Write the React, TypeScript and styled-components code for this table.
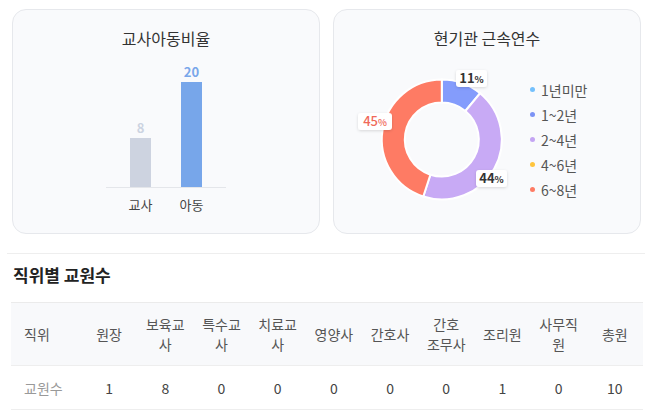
import React from 'react'
import styled, { createGlobalStyle } from 'styled-components'

const GlobalStyle = createGlobalStyle`
    html, body {
        margin: 0;
        padding: 0;
        background: #ffffff;
    }
    body {
        font-family: 'Noto Sans CJK KR', 'Noto Sans', sans-serif;
        color: #333;
    }
`

const FONT = "'Noto Sans CJK KR', 'Noto Sans', sans-serif"

const Page = styled.div`
    padding-top: 9px;
    width: 646px;
`

const CardRow = styled.div`
    display: grid;
    grid-template-columns: 308px 308px;
    gap: 13px;
    margin-left: 12px;
`

const Card = styled.div`
    box-sizing: border-box;
    height: 225px;
    padding-top: 17px;
    background: #f9fafc;
    border: 1px solid #e6e8ec;
    border-radius: 14px;
    display: flex;
    flex-direction: column;
    align-items: center;
`

const CardTitle = styled.h3`
    margin: 0;
    font-size: 16px;
    line-height: 22px;
    font-weight: 400;
    color: #333;
`

const BarChartSvg = styled.svg`
    margin-top: 11px;
    display: block;
`

const DonutBody = styled.div`
    display: flex;
    align-items: center;
    align-self: stretch;
    margin-top: 13px;
    padding-left: 13px;
    height: 155px;
`

const Legend = styled.ul`
    list-style: none;
    margin: 0 0 0 13px;
    padding: 0;
    display: flex;
    flex-direction: column;
`

const LegendItem = styled.li`
    display: flex;
    align-items: center;
    gap: 6px;
    height: 25px;
    font-size: 14px;
    color: #555;
`

const Dot = styled.span<{ $color: string }>`
    width: 5px;
    height: 5px;
    border-radius: 50%;
    background: ${({ $color }) => $color};
`

const Divider = styled.hr`
    margin: 19px 1px 0 7px;
    border: 0;
    height: 1px;
    background: #eeeeee;
`

const SectionTitle = styled.h2`
    margin: 9px 0 0 13px;
    font-size: 17px;
    line-height: 24px;
    font-weight: 700;
    color: #222;
`

const Table = styled.table`
    margin: 15px 0 0 11px;
    width: 632px;
    table-layout: fixed;
    border-collapse: collapse;
    font-size: 14px;
    line-height: 20px;
`

const HeadRow = styled.tr`
    background: #f8f9fb;
    border-top: 1px solid #ebebeb;
    border-bottom: 1px solid #eeeeee;
`

const Th = styled.th<{ $first?: boolean }>`
    font-weight: 400;
    color: #555;
    white-space: nowrap;
    padding: ${({ $first }) => ($first ? '11px 0 11px 13px' : '11px 2px')};
    text-align: ${({ $first }) => ($first ? 'left' : 'center')};
`

const HeadLine = styled.span`
    display: block;
`

const BodyRow = styled.tr`
    border-bottom: 1px solid #eeeeee;
`

const Td = styled.td<{ $first?: boolean }>`
    padding: ${({ $first }) => ($first ? '12px 0 11px 13px' : '12px 2px 11px')};
    text-align: ${({ $first }) => ($first ? 'left' : 'center')};
    color: ${({ $first }) => ($first ? '#999' : '#444')};
`

const bars = [
    { label: '교사', value: 8, height: 49, color: '#cdd3e0', text: '#ccd3e1', x: 24 },
    { label: '아동', value: 20, height: 105, color: '#77a6ea', text: '#7aa7ea', x: 75 },
]

const segments = [
    { label: '1년미만', value: 0, color: '#74c0fc', legend: '#74c0fc' },
    { label: '1~2년', value: 11, color: '#849cfc', legend: '#7c93f5' },
    { label: '2~4년', value: 44, color: '#c8aaf5', legend: '#c4a5f3' },
    { label: '4~6년', value: 0, color: '#ffc53d', legend: '#ffc53d' },
    { label: '6~8년', value: 45, color: '#fe7b64', legend: '#fe7b64' },
]

// label boxes around the donut (centre x, centre y in svg coords)
const labelPos: Record<string, { x: number; y: number; w: number; color: string; weight: number }> = {
    '1~2년': { x: 124.5, y: 16.5, w: 31, color: '#333', weight: 700 },
    '2~4년': { x: 144.5, y: 116.5, w: 31, color: '#333', weight: 700 },
    '6~8년': { x: 28, y: 59.5, w: 34, color: '#f0695a', weight: 500 },
}

const columns = [
    ['원장'],
    ['보육교', '사'],
    ['특수교', '사'],
    ['치료교', '사'],
    ['영양사'],
    ['간호사'],
    ['간호', '조무사'],
    ['조리원'],
    ['사무직', '원'],
    ['총원'],
]
const counts = [1, 8, 0, 0, 0, 0, 0, 1, 0, 10]

const CX = 94.8
const CY = 77.5
const R_OUT = 60
const R_IN = 37

function pt(r: number, deg: number) {
    const a = (deg * Math.PI) / 180
    return `${(CX + r * Math.sin(a)).toFixed(2)} ${(CY - r * Math.cos(a)).toFixed(2)}`
}

function sector(a0: number, a1: number) {
    const large = a1 - a0 > 180 ? 1 : 0
    return [
        `M ${pt(R_OUT, a0)}`,
        `A ${R_OUT} ${R_OUT} 0 ${large} 1 ${pt(R_OUT, a1)}`,
        `L ${pt(R_IN, a1)}`,
        `A ${R_IN} ${R_IN} 0 ${large} 0 ${pt(R_IN, a0)}`,
        'Z',
    ].join(' ')
}

function BarChart() {
    return (
        <BarChartSvg width="120" height="158" viewBox="0 0 120 158" fontFamily={FONT}>
            <line x1="0" y1="127.5" x2="120" y2="127.5" stroke="#e4e6ea" strokeWidth="1" />
            {bars.map((b) => (
                <g key={b.label}>
                    <rect x={b.x} y={127 - b.height} width="21" height={b.height} fill={b.color} />
                    <text
                        x={b.x + 10.5}
                        y={127 - b.height - 5}
                        textAnchor="middle"
                        fontSize="13"
                        fontWeight="700"
                        fill={b.text}
                    >
                        {b.value}
                    </text>
                    <text x={b.x + 10.5} y="150" textAnchor="middle" fontSize="13" fill="#444">
                        {b.label}
                    </text>
                </g>
            ))}
        </BarChartSvg>
    )
}

function Donut() {
    let acc = 0
    const arcs = segments
        .filter((s) => s.value > 0)
        .map((s) => {
            const a0 = (acc / 100) * 360
            acc += s.value
            const a1 = (acc / 100) * 360
            return { ...s, a0, a1 }
        })

    return (
        <svg width="170" height="155" viewBox="0 0 170 155" fontFamily={FONT}>
            <defs>
                <filter id="lblShadow" x="-30%" y="-40%" width="160%" height="180%">
                    <feDropShadow dx="0" dy="1" stdDeviation="1.6" floodColor="#000" floodOpacity="0.14" />
                </filter>
            </defs>
            {arcs.map((s) => (
                <path key={s.label} d={sector(s.a0, s.a1)} fill={s.color} stroke="#ffffff" strokeWidth="2" />
            ))}
            {arcs.map((s) => {
                const p = labelPos[s.label]
                return (
                    <g key={s.label}>
                        <rect
                            x={p.x - p.w / 2}
                            y={p.y - 8.5}
                            width={p.w}
                            height="17"
                            rx="3"
                            fill="#ffffff"
                            filter="url(#lblShadow)"
                        />
                        <text x={p.x} y={p.y + 4.5} textAnchor="middle" fill={p.color} fontWeight={p.weight}>
                            <tspan fontSize="13">{s.value}</tspan>
                            <tspan fontSize="9.5">%</tspan>
                        </text>
                    </g>
                )
            })}
        </svg>
    )
}

export default function App() {
    return (
        <Page>
            <GlobalStyle />
            <CardRow>
                <Card>
                    <CardTitle>교사아동비율</CardTitle>
                    <BarChart />
                </Card>
                <Card>
                    <CardTitle>현기관 근속연수</CardTitle>
                    <DonutBody>
                        <Donut />
                        <Legend>
                            {segments.map((s) => (
                                <LegendItem key={s.label}>
                                    <Dot $color={s.legend} />
                                    {s.label}
                                </LegendItem>
                            ))}
                        </Legend>
                    </DonutBody>
                </Card>
            </CardRow>

            <Divider />
            <SectionTitle>직위별 교원수</SectionTitle>

            <Table>
                <colgroup>
                    <col style={{ width: 70 }} />
                    {columns.map((c) => (
                        <col key={c.join('')} />
                    ))}
                </colgroup>
                <thead>
                    <HeadRow>
                        <Th $first>직위</Th>
                        {columns.map((c) => (
                            <Th key={c.join('')}>
                                {c.map((line) => (
                                    <HeadLine key={line}>{line}</HeadLine>
                                ))}
                            </Th>
                        ))}
                    </HeadRow>
                </thead>
                <tbody>
                    <BodyRow>
                        <Td $first>교원수</Td>
                        {counts.map((n, i) => (
                            <Td key={i}>{n}</Td>
                        ))}
                    </BodyRow>
                </tbody>
            </Table>
        </Page>
    )
}
